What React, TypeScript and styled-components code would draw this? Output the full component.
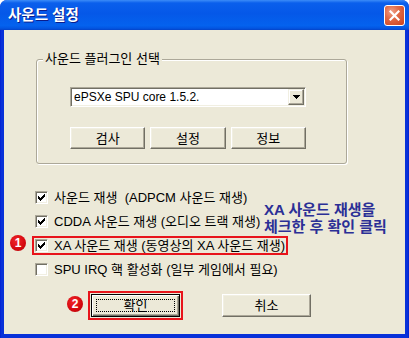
import React from "react";
import styled, { createGlobalStyle } from "styled-components";

const GlobalStyle = createGlobalStyle`
  html, body {
    margin: 0;
    padding: 0;
    background: #fff;
  }
  body {
    font-family: "Liberation Sans", "Noto Sans CJK KR", sans-serif;
    font-size: 13px;
    color: #000;
  }
`;

const Window = styled.div`
  display: flex;
  flex-direction: column;
  width: 409px;
  height: 338px;
  box-sizing: border-box;
  background: linear-gradient(to right, #0019cf 0, #0831d9 1px, #0831d9 calc(100% - 1px), #0019cf 100%);
  border-radius: 7px 7px 0 0;
  overflow: hidden;
`;

const TitleBar = styled.div`
  display: flex;
  align-items: center;
  justify-content: space-between;
  flex: none;
  height: 30px;
  padding: 0 4px 0 8px;
  box-sizing: border-box;
  background: linear-gradient(
    to bottom,
    #3c8cf8 0%,
    #0a5fec 10%,
    #0558e8 45%,
    #0462ee 85%,
    #0356e2 94%,
    #0443c8 100%
  );
`;

const Title = styled.span`
  color: #fff;
  font-size: 14.5px;
  font-weight: bold;
  line-height: 17px;
  text-shadow: 1px 1px #0a1d8c;
`;

const CloseButton = styled.span`
  display: flex;
  align-items: center;
  justify-content: center;
  width: 21px;
  height: 21px;
  box-sizing: border-box;
  border: 1px solid #fff;
  border-radius: 3px;
  background: radial-gradient(circle at 35% 30%, #f0a088 0%, #e06a46 40%, #c9401d 100%);
`;

const Client = styled.div`
  position: relative;
  flex: 1;
  display: flex;
  flex-direction: column;
  align-items: flex-start;
  margin: 0 4px 4px;
  padding: 22px 0 0 28px;
  background: #ece9d8;
`;

const Group = styled.fieldset`
  width: 311px;
  box-sizing: border-box;
  margin: 0 0 0 4px;
  padding: 0;
  border: 1px solid #aca899;
  border-radius: 3px;
  box-shadow: inset 1px 1px #fff, 1px 1px #fff;
`;

const Legend = styled.legend`
  margin-left: 6px;
  padding: 0 2px;
  line-height: 14px;
  background: #ece9d8;
`;

const GroupBody = styled.div`
  padding: 21px 0 14px 33px;
`;

const Combo = styled.div`
  display: flex;
  align-items: center;
  justify-content: space-between;
  width: 236px;
  height: 20px;
  box-sizing: border-box;
  border: 1px solid;
  border-color: #aca899 #fff #fff #aca899;
  box-shadow: inset 1px 1px #716f64, inset -1px -1px #f1efe2;
  padding: 1px 1px 1px 3px;
  background: #fff;
  font-size: 12px;
  line-height: 16px;
`;

const ComboArrow = styled.span`
  display: flex;
  align-items: center;
  justify-content: center;
  width: 16px;
  height: 16px;
  box-sizing: border-box;
  border: 1px solid;
  border-color: #f1efe2 #716f64 #716f64 #f1efe2;
  box-shadow: inset -1px -1px #aca899, inset 1px 1px #fff;
  background: #ece9d8;
`;

const ButtonGrid = styled.div`
  display: grid;
  grid-template-columns: repeat(3, 1fr);
  gap: 5px;
  width: 236px;
  margin-top: 20px;
`;

const Button = styled.span<{ $width?: number; $default?: boolean }>`
  display: flex;
  align-items: center;
  justify-content: center;
  width: ${(p) => (p.$width ? `${p.$width}px` : "auto")};
  height: ${(p) => (p.$width ? "23px" : "22px")};
  box-sizing: border-box;
  background: #ece9d8;
  border: 1px solid;
  border-color: ${(p) =>
    p.$default ? "#000" : "#fff #716f64 #716f64 #fff"};
  box-shadow: ${(p) =>
    p.$default
      ? "inset 1px 1px #fff, inset -1px -1px #716f64, inset -2px -2px #aca899"
      : "inset -1px -1px #aca899, inset 1px 1px #f1efe2"};
  line-height: 15px;
`;

const FocusRing = styled.span`
  display: flex;
  align-items: center;
  justify-content: center;
  width: calc(100% - 8px);
  height: calc(100% - 8px);
  border: 1px dotted #000;
  box-sizing: border-box;
`;

const Options = styled.div`
  display: flex;
  flex-direction: column;
  align-items: flex-start;
  gap: 5px;
  margin-top: 24px;
`;

const Option = styled.label<{ $marked?: boolean }>`
  position: relative;
  display: flex;
  align-items: center;
  height: 19px;
  box-sizing: border-box;
  padding: 0 1px;
  border: 2px solid ${(p) => (p.$marked ? "#e8141b" : "transparent")};
  line-height: 15px;
  white-space: pre;
`;

const CheckBox = styled.span`
  display: flex;
  align-items: center;
  justify-content: center;
  flex: none;
  width: 13px;
  height: 13px;
  box-sizing: border-box;
  margin-right: 6px;
  border: 1px solid;
  border-color: #aca899 #fff #fff #aca899;
  box-shadow: inset 1px 1px #716f64, inset -1px -1px #f1efe2;
  background: #fff;
`;

const Actions = styled.div`
  display: flex;
  align-items: center;
  gap: 36px;
  margin: 12px 0 0 56px;
`;

const ButtonFrame = styled.div<{ $marked?: boolean }>`
  position: relative;
  padding: 1px;
  border: 2px solid ${(p) => (p.$marked ? "#e8141b" : "transparent")};
`;

const Badge = styled.span<{ $left: number; $top: number }>`
  position: absolute;
  left: ${(p) => p.$left}px;
  top: ${(p) => p.$top}px;
  display: flex;
  align-items: center;
  justify-content: center;
  width: 16px;
  height: 16px;
  border-radius: 50%;
  background: radial-gradient(circle at 40% 35%, #f0262a 0%, #d5080e 60%, #a8060a 100%);
  color: #fff;
  font-family: "Liberation Sans", sans-serif;
  font-size: 12px;
  font-weight: bold;
  line-height: 16px;
`;

const Note = styled.div`
  position: absolute;
  left: 260px;
  top: 171px;
  color: #2b2f96;
  font-size: 15px;
  font-weight: bold;
  line-height: 17px;
  white-space: pre;
`;

const CheckMark = () => (
  <svg width="7" height="7" viewBox="0 0 7 7" shapeRendering="crispEdges">
    <path
      d="M6 0h1v3h-1v1h-1v1h-1v1h-1v1h-1v-1h-1v-1h-1v-3h1v1h1v1h1v-1h1v-1h1v-1h0z"
      fill="#000"
    />
  </svg>
);

const options = [
  { text: "사운드 재생  (ADPCM 사운드 재생)", checked: true },
  { text: "CDDA 사운드 재생 (오디오 트랙 재생)", checked: true },
  { text: "XA 사운드 재생 (동영상의 XA 사운드 재생)", checked: true, marked: true },
  { text: "SPU IRQ 핵 활성화 (일부 게임에서 필요)", checked: false },
];

export default function App() {
  return (
    <>
      <GlobalStyle />
      <Window>
        <TitleBar>
          <Title>사운드 설정</Title>
          <CloseButton>
            <svg width="11" height="11" viewBox="0 0 11 11">
              <path d="M1.5 1.5L9.5 9.5M9.5 1.5L1.5 9.5" stroke="#fff" strokeWidth="2.2" strokeLinecap="square" />
            </svg>
          </CloseButton>
        </TitleBar>
        <Client>
          <Group>
            <Legend>사운드 플러그인 선택</Legend>
            <GroupBody>
              <Combo>
                <span>ePSXe SPU core 1.5.2.</span>
                <ComboArrow>
                  <svg width="7" height="4" viewBox="0 0 7 4" shapeRendering="crispEdges">
                    <path d="M0 0h7v1h-1v1h-1v1h-1v1h-1v-1h-1v-1h-1v-1h-1z" fill="#000" />
                  </svg>
                </ComboArrow>
              </Combo>
              <ButtonGrid>
                <Button>검사</Button>
                <Button>설정</Button>
                <Button>정보</Button>
              </ButtonGrid>
            </GroupBody>
          </Group>

          <Options>
            {options.map((o, i) => (
              <Option key={i} $marked={o.marked}>
                {o.marked && (
                  <Badge $left={-24} $top={-3}>
                    1
                  </Badge>
                )}
                <CheckBox>{o.checked && <CheckMark />}</CheckBox>
                {o.text}
              </Option>
            ))}
          </Options>

          <Actions>
            <ButtonFrame $marked>
              <Badge $left={-23} $top={3}>
                2
              </Badge>
              <Button $width={89} $default>
                <FocusRing>확인</FocusRing>
              </Button>
            </ButtonFrame>
            <ButtonFrame>
              <Button $width={89}>취소</Button>
            </ButtonFrame>
          </Actions>

          <Note>{"XA 사운드 재생을\n체크한 후 확인 클릭"}</Note>
        </Client>
      </Window>
    </>
  );
}
